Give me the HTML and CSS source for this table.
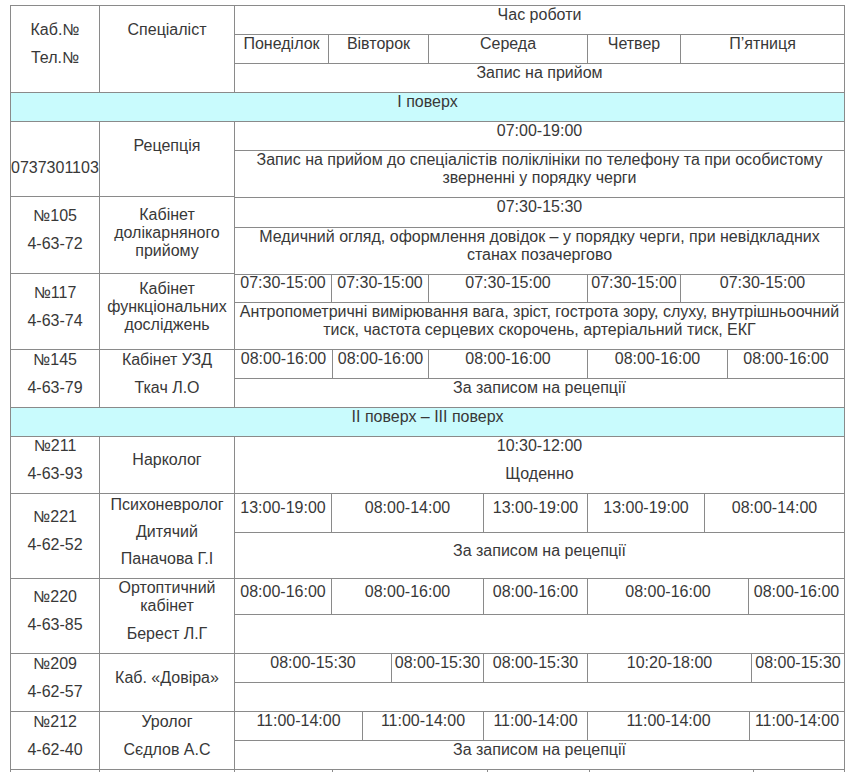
FILE: index.html
```html
<!DOCTYPE html>
<html lang="uk">
<head>
<meta charset="utf-8">
<title>Графік роботи</title>
<link rel="stylesheet" href="styles.css">
</head>
<body>
<div class="sched">
  <div class="row">
    <div class="c"><p>Каб.№</p><p>Тел.№</p></div>
    <div class="c"><p>Спеціаліст</p><p>&nbsp;</p></div>
    <div class="rt">
      <div class="sub h29"><div class="c"><p>Час роботи</p></div></div>
      <div class="sub g-days h29">
        <div class="c"><p>Понеділок</p></div>
        <div class="c"><p>Вівторок</p></div>
        <div class="c"><p>Середа</p></div>
        <div class="c"><p>Четвер</p></div>
        <div class="c"><p>П’ятниця</p></div>
      </div>
      <div class="sub h29"><div class="c"><p>Запис на прийом</p></div></div>
    </div>
  </div>

  <div class="floor"><p>І поверх</p></div>

  <div class="row">
    <div class="c"><p>&nbsp;</p><p class="nowrap">0737301103</p></div>
    <div class="c c-rec"><p>Рецепція</p></div>
    <div class="rt">
      <div class="sub h29"><div class="c"><p>07:00-19:00</p></div></div>
      <div class="sub h46"><div class="c"><p>Запис на прийом до спеціалістів поліклініки по телефону та при особистому зверненні у порядку черги</p></div></div>
    </div>
  </div>

  <div class="row">
    <div class="c"><p>№105</p><p>4-63-72</p></div>
    <div class="c c-low"><p>Кабінет долікарняного прийому</p></div>
    <div class="rt">
      <div class="sub h31"><div class="c"><p>07:30-15:30</p></div></div>
      <div class="sub h46"><div class="c"><p>Медичний огляд, оформлення довідок – у порядку черги, при невідкладних станах позачергово</p></div></div>
    </div>
  </div>

  <div class="row">
    <div class="c"><p>№117</p><p>4-63-74</p></div>
    <div class="c"><p>Кабінет функціональних досліджень</p></div>
    <div class="rt">
      <div class="sub g-117 h29">
        <div class="c"><p>07:30-15:00</p></div>
        <div class="c"><p>07:30-15:00</p></div>
        <div class="c"><p>07:30-15:00</p></div>
        <div class="c"><p>07:30-15:00</p></div>
        <div class="c"><p>07:30-15:00</p></div>
      </div>
      <div class="sub h47"><div class="c"><p>Антропометричні вимірювання вага, зріст, гострота зору, слуху, внутрішньоочний тиск, частота серцевих скорочень, артеріальний тиск, ЕКГ</p></div></div>
    </div>
  </div>

  <div class="row">
    <div class="c"><p>№145</p><p>4-63-79</p></div>
    <div class="c"><p>Кабінет УЗД</p><p>Ткач Л.О</p></div>
    <div class="rt">
      <div class="sub g-145 h29">
        <div class="c"><p>08:00-16:00</p></div>
        <div class="c"><p>08:00-16:00</p></div>
        <div class="c"><p>08:00-16:00</p></div>
        <div class="c"><p>08:00-16:00</p></div>
        <div class="c"><p>08:00-16:00</p></div>
      </div>
      <div class="sub h29"><div class="c"><p>За записом на рецепції</p></div></div>
    </div>
  </div>

  <div class="floor"><p>ІІ поверх – ІІІ поверх</p></div>

  <div class="row">
    <div class="c"><p>№211</p><p>4-63-93</p></div>
    <div class="c"><p>Нарколог</p></div>
    <div class="rt">
      <div class="sub h57"><div class="c"><p>10:30-12:00</p><p>Щоденно</p></div></div>
    </div>
  </div>

  <div class="row">
    <div class="c"><p>№221</p><p>4-62-52</p></div>
    <div class="c c-tight"><p>Психоневролог</p><p>Дитячий</p><p>Паначова Г.І</p></div>
    <div class="rt">
      <div class="sub g-221 h39">
        <div class="c"><p>13:00-19:00</p></div>
        <div class="c"><p>08:00-14:00</p></div>
        <div class="c"><p>13:00-19:00</p></div>
        <div class="c"><p>13:00-19:00</p></div>
        <div class="c"><p>08:00-14:00</p></div>
      </div>
      <div class="sub h46"><div class="c"><p>За записом на рецепції</p></div></div>
    </div>
  </div>

  <div class="row">
    <div class="c"><p>№220</p><p>4-63-85</p></div>
    <div class="c"><p>Ортоптичний кабінет</p><p>Берест Л.Г</p></div>
    <div class="rt">
      <div class="sub g-220 h36">
        <div class="c"><p>08:00-16:00</p></div>
        <div class="c"><p>08:00-16:00</p></div>
        <div class="c"><p>08:00-16:00</p></div>
        <div class="c"><p>08:00-16:00</p></div>
        <div class="c"><p>08:00-16:00</p></div>
      </div>
      <div class="sub h39"><div class="c"></div></div>
    </div>
  </div>

  <div class="row">
    <div class="c"><p>№209</p><p>4-62-57</p></div>
    <div class="c"><p>Каб. «Довіра»</p></div>
    <div class="rt">
      <div class="sub g-209 h29">
        <div class="c"><p>08:00-15:30</p></div>
        <div class="c"><p>08:00-15:30</p></div>
        <div class="c"><p>08:00-15:30</p></div>
        <div class="c"><p>10:20-18:00</p></div>
        <div class="c"><p>08:00-15:30</p></div>
      </div>
      <div class="sub h29"><div class="c"></div></div>
    </div>
  </div>

  <div class="row">
    <div class="c"><p>№212</p><p>4-62-40</p></div>
    <div class="c"><p>Уролог</p><p>Сєдлов А.С</p></div>
    <div class="rt">
      <div class="sub g-212 h29">
        <div class="c"><p>11:00-14:00</p></div>
        <div class="c"><p>11:00-14:00</p></div>
        <div class="c"><p>11:00-14:00</p></div>
        <div class="c"><p>11:00-14:00</p></div>
        <div class="c"><p>11:00-14:00</p></div>
      </div>
      <div class="sub h29"><div class="c"><p>За записом на рецепції</p></div></div>
    </div>
  </div>

  <div class="row">
    <div class="c"><p>&nbsp;</p></div>
    <div class="c"><p>&nbsp;</p></div>
    <div class="rt">
      <div class="sub g-last h29">
        <div class="c"></div>
        <div class="c"></div>
        <div class="c"></div>
        <div class="c"></div>
        <div class="c"></div>
      </div>
      <div class="sub h29"><div class="c"></div></div>
    </div>
  </div>
</div>
</body>
</html>
```

FILE: styles.css
```css
html, body {
  margin: 0;
  background: #ffffff;
}

body {
  padding: 5px 10px;
  font-family: "Liberation Sans", Arial, sans-serif;
  font-size: 16px;
  line-height: normal;
  color: #383838;
}

.sched {
  width: 835px;
  box-sizing: border-box;
  border-left: 1px solid #8a8a8a;
  border-top: 1px solid #8a8a8a;
}

.row {
  display: grid;
  grid-template-columns: 89px 135px 610px;
}

.rt {
  display: flex;
  flex-direction: column;
}

.sub {
  display: grid;
  grid-template-columns: 1fr;
}

.c {
  box-sizing: border-box;
  border-right: 1px solid #8a8a8a;
  border-bottom: 1px solid #8a8a8a;
  display: flex;
  flex-direction: column;
  justify-content: center;
  text-align: center;
  min-width: 0;
}

.c p,
.floor p {
  margin: 0 0 10px;
}

.nowrap {
  white-space: nowrap;
  text-align: left;
}

.c-rec {
  justify-content: flex-start;
  padding-top: 15px;
}

.c-low {
  padding-top: 5px;
}

.c-tight p {
  margin-bottom: 9px;
}

.floor {
  box-sizing: border-box;
  height: 29px;
  background: #c9fbfd;
  border-right: 1px solid #8a8a8a;
  border-bottom: 1px solid #8a8a8a;
  text-align: center;
  display: flex;
  flex-direction: column;
  justify-content: center;
}

.h29 { height: 29px; }
.h31 { height: 31px; }
.h36 { height: 36px; }
.h39 { height: 39px; }
.h46 { height: 46px; }
.h47 { height: 47px; }
.h57 { height: 57px; }

.g-days { grid-template-columns: 94px 100px 159px 93px 164px; }
.g-117  { grid-template-columns: 97px 97px 159px 93px 164px; }
.g-145  { grid-template-columns: 98px 96px 159px 140px 117px; }
.g-221  { grid-template-columns: 97px 152px 104px 117px 140px; }
.g-220  { grid-template-columns: 97px 152px 104px 161px 96px; }
.g-209  { grid-template-columns: 157px 92px 104px 164px 93px; }
.g-212  { grid-template-columns: 128px 121px 104px 162px 95px; }
.g-last { grid-template-columns: 98px 155px 102px 164px 91px; }
```
